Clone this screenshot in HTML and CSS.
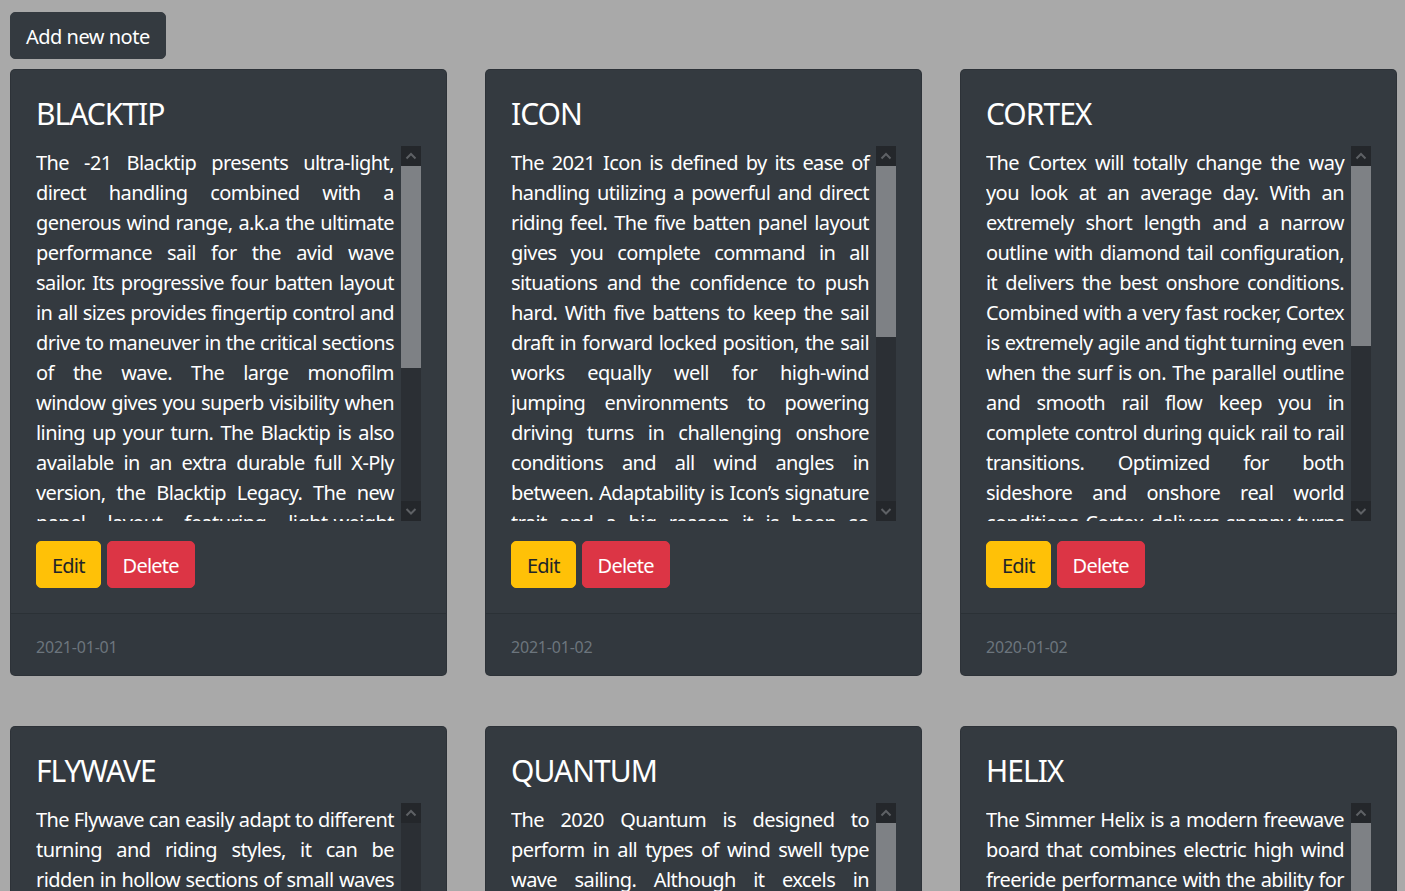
FILE: index.html
```html
<!DOCTYPE html>
<html lang="en">
<head>
<meta charset="utf-8">
<title>Notes</title>
<link rel="stylesheet" href="styles.css">
</head>
<body>
<div class="page">
  <button class="btn btn-dark add-btn">Add new note</button>
  <div class="notes">

    <div class="card">
      <div class="card-body">
        <h4 class="card-title">BLACKTIP</h4>
        <div class="note-scroll">
          <p class="note-text">The -21 Blacktip presents ultra-light, direct handling combined with a generous wind range, a.k.a the ultimate performance sail for the avid wave sailor. Its progressive four batten layout in all sizes provides fingertip control and drive to maneuver in the critical sections of the wave. The large monofilm window gives you superb visibility when lining up your turn. The Blacktip is also available in an extra durable full X-Ply version, the Blacktip Legacy. The new panel layout featuring light-weight materials keeps the sail light in the hands, while the refined luff curve gives a wider tuning range and a more forgiving feel in gusty conditions. Whether you are riding down the line or going for big jumps, the Blacktip delivers instant power when you need it.</p>
          <div class="scrollbar">
            <span class="sb-btn"><svg viewBox="0 0 20 20" width="20" height="20"><polyline points="5.5,12.5 10,8 14.5,12.5"/></svg></span>
            <span class="sb-track"><span class="sb-thumb" style="height:202px"></span></span>
            <span class="sb-btn"><svg viewBox="0 0 20 20" width="20" height="20"><polyline points="5.5,8 10,12.5 14.5,8"/></svg></span>
          </div>
        </div>
        <div class="actions">
          <button class="btn btn-warning">Edit</button>
          <button class="btn btn-danger">Delete</button>
        </div>
      </div>
      <div class="card-footer"><small class="text-muted">2021-01-01</small></div>
    </div>

    <div class="card">
      <div class="card-body">
        <h4 class="card-title">ICON</h4>
        <div class="note-scroll">
          <p class="note-text">The 2021 Icon is defined by its ease of handling utilizing a powerful and direct riding feel. The five batten panel layout gives you complete command in all situations and the confidence to push hard. With five battens to keep the sail draft in forward locked position, the sail works equally well for high-wind jumping environments to powering driving turns in challenging onshore conditions and all wind angles in between. Adaptability is Icon’s signature trait and a big reason it is been so popular among wave sailors of every level. The refined luff curve and the balanced outline give a light feel in the hands, while the compact boom length keeps the rig easy to throw around in the critical sections. Available in a wide range of sizes, the Icon covers everything from light onshore days to radical side-off conditions, always with the same predictable and confidence inspiring feel that lets you focus on the wave.</p>
          <div class="scrollbar">
            <span class="sb-btn"><svg viewBox="0 0 20 20" width="20" height="20"><polyline points="5.5,12.5 10,8 14.5,12.5"/></svg></span>
            <span class="sb-track"><span class="sb-thumb" style="height:171px"></span></span>
            <span class="sb-btn"><svg viewBox="0 0 20 20" width="20" height="20"><polyline points="5.5,8 10,12.5 14.5,8"/></svg></span>
          </div>
        </div>
        <div class="actions">
          <button class="btn btn-warning">Edit</button>
          <button class="btn btn-danger">Delete</button>
        </div>
      </div>
      <div class="card-footer"><small class="text-muted">2021-01-02</small></div>
    </div>

    <div class="card">
      <div class="card-body">
        <h4 class="card-title">CORTEX</h4>
        <div class="note-scroll">
          <p class="note-text">The Cortex will totally change the way you look at an average day. With an extremely short length and a narrow outline with diamond tail configuration, it delivers the best onshore conditions. Combined with a very fast rocker, Cortex is extremely agile and tight turning even when the surf is on. The parallel outline and smooth rail flow keep you in complete control during quick rail to rail transitions. Optimized for both sideshore and onshore real world conditions Cortex delivers snappy turns and loose top turns in every type of wave. The compact volume distribution keeps the board easy to sink into the turn, while the double concave bottom adds grip and release at exactly the right moment. Whether you ride small mushy waves or clean down the line conditions, the Cortex keeps you in the pocket and makes every day on the water count.</p>
          <div class="scrollbar">
            <span class="sb-btn"><svg viewBox="0 0 20 20" width="20" height="20"><polyline points="5.5,12.5 10,8 14.5,12.5"/></svg></span>
            <span class="sb-track"><span class="sb-thumb" style="height:180px"></span></span>
            <span class="sb-btn"><svg viewBox="0 0 20 20" width="20" height="20"><polyline points="5.5,8 10,12.5 14.5,8"/></svg></span>
          </div>
        </div>
        <div class="actions">
          <button class="btn btn-warning">Edit</button>
          <button class="btn btn-danger">Delete</button>
        </div>
      </div>
      <div class="card-footer"><small class="text-muted">2020-01-02</small></div>
    </div>

    <div class="card">
      <div class="card-body">
        <h4 class="card-title">FLYWAVE</h4>
        <div class="note-scroll">
          <p class="note-text">The Flywave can easily adapt to different turning and riding styles, it can be ridden in hollow sections of small waves as well as in bigger, more powerful conditions. Its flat rocker line gives early planing and plenty of speed, while the rounded tail keeps the board loose and playful in the turns.</p>
          <div class="scrollbar">
            <span class="sb-btn"><svg viewBox="0 0 20 20" width="20" height="20"><polyline points="5.5,12.5 10,8 14.5,12.5"/></svg></span>
            <span class="sb-track"></span>
            <span class="sb-btn"><svg viewBox="0 0 20 20" width="20" height="20"><polyline points="5.5,8 10,12.5 14.5,8"/></svg></span>
          </div>
        </div>
        <div class="actions">
          <button class="btn btn-warning">Edit</button>
          <button class="btn btn-danger">Delete</button>
        </div>
      </div>
      <div class="card-footer"><small class="text-muted">2020-01-03</small></div>
    </div>

    <div class="card">
      <div class="card-body">
        <h4 class="card-title">QUANTUM</h4>
        <div class="note-scroll">
          <p class="note-text">The 2020 Quantum is designed to perform in all types of wind swell type wave sailing. Although it excels in onshore and cross-onshore conditions, it is just as much at home in clean down the line waves. The five batten layout gives stability and drive, while the short boom length keeps the sail compact and manoeuvrable in every turn. A refined luff curve adds a wide tuning range, so the Quantum stays smooth and controllable when the wind picks up and the waves get bigger. It is the ideal choice for sailors who want one sail for every condition they meet on the water.</p>
          <div class="scrollbar">
            <span class="sb-btn"><svg viewBox="0 0 20 20" width="20" height="20"><polyline points="5.5,12.5 10,8 14.5,12.5"/></svg></span>
            <span class="sb-track"><span class="sb-thumb" style="height:200px"></span></span>
            <span class="sb-btn"><svg viewBox="0 0 20 20" width="20" height="20"><polyline points="5.5,8 10,12.5 14.5,8"/></svg></span>
          </div>
        </div>
        <div class="actions">
          <button class="btn btn-warning">Edit</button>
          <button class="btn btn-danger">Delete</button>
        </div>
      </div>
      <div class="card-footer"><small class="text-muted">2020-01-04</small></div>
    </div>

    <div class="card">
      <div class="card-body">
        <h4 class="card-title">HELIX</h4>
        <div class="note-scroll">
          <p class="note-text">The Simmer Helix is a modern freewave board that combines electric high wind freeride performance with the ability for radical wave riding. Its smooth rocker line and balanced volume distribution make it fast and easy to sail, while the narrow tail gives plenty of grip and control in the turns. Whether you are jumping on a flat water day or carving on a big wave, the Helix feels at home in both worlds and keeps a smile on your face from the first run of the day to the last one.</p>
          <div class="scrollbar">
            <span class="sb-btn"><svg viewBox="0 0 20 20" width="20" height="20"><polyline points="5.5,12.5 10,8 14.5,12.5"/></svg></span>
            <span class="sb-track"><span class="sb-thumb" style="height:230px"></span></span>
            <span class="sb-btn"><svg viewBox="0 0 20 20" width="20" height="20"><polyline points="5.5,8 10,12.5 14.5,8"/></svg></span>
          </div>
        </div>
        <div class="actions">
          <button class="btn btn-warning">Edit</button>
          <button class="btn btn-danger">Delete</button>
        </div>
      </div>
      <div class="card-footer"><small class="text-muted">2020-01-05</small></div>
    </div>

  </div>
</div>
</body>
</html>
```

FILE: styles.css
```css
* { box-sizing: border-box; }

html, body {
  margin: 0;
  background: #a9a9a9;
}

body {
  font-family: "Noto Sans", "Open Sans", "Liberation Sans", sans-serif;
  font-size: 20px;
  line-height: 30px;
  color: #212529;
}

.page {
  padding: 12px 8px 40px 10px;
}

.btn {
  display: inline-block;
  font-family: inherit;
  font-size: 20px;
  line-height: 30px;
  font-weight: 400;
  padding: 8.5px 15px 6.5px;
  border: 1px solid transparent;
  border-radius: 5px;
  cursor: pointer;
  letter-spacing: -0.8px;
}

.btn-dark {
  background: #343a40;
  border-color: #343a40;
  color: #fff;
}

.add-btn {
  margin-bottom: 10px;
  letter-spacing: -0.5px;
}

.btn-warning {
  background: #ffc107;
  border-color: #ffc107;
  color: #212529;
}

.btn-danger {
  background: #dc3545;
  border-color: #dc3545;
  color: #fff;
}

.notes {
  display: grid;
  grid-template-columns: repeat(3, 437px);
  column-gap: 38px;
  row-gap: 50px;
}

.card {
  background: #343a40;
  border: 1px solid rgba(0, 0, 0, 0.125);
  border-radius: 5px;
  color: #fff;
  display: flex;
  flex-direction: column;
  overflow: hidden;
}

.card-body {
  padding: 25px;
}

.card-title {
  margin: 0 0 15px;
  padding-top: 1px;
  height: 36px;
  font-size: 30px;
  line-height: 36px;
  font-weight: 400;
  letter-spacing: -1px;
}

.note-scroll {
  display: flex;
  height: 375px;
  margin-bottom: 20px;
}

.note-text {
  flex: 1;
  margin: 0;
  padding: 2px 7px 0 0;
  overflow: hidden;
  text-align: justify;
  letter-spacing: -0.58px;
}

.scrollbar {
  width: 20px;
  flex: none;
  display: flex;
  flex-direction: column;
  background: #2b2f34;
}

.sb-btn {
  height: 20px;
  flex: none;
  background: #24272b;
  display: flex;
}

.sb-btn svg {
  display: block;
}

.sb-btn polyline {
  fill: none;
  stroke: #5e6165;
  stroke-width: 2;
}

.sb-track {
  flex: 1;
  display: flex;
  flex-direction: column;
}

.sb-thumb {
  display: block;
  background: #7e8185;
}

.actions {
  display: flex;
  gap: 6px;
}

.card-footer {
  border-top: 1px solid rgba(0, 0, 0, 0.125);
  background: rgba(0, 0, 0, 0.03);
  padding: 17px 25px 13px;
  line-height: 30px;
}

.text-muted {
  color: #6c757d;
  font-size: 16px;
  letter-spacing: -0.2px;
}
```
